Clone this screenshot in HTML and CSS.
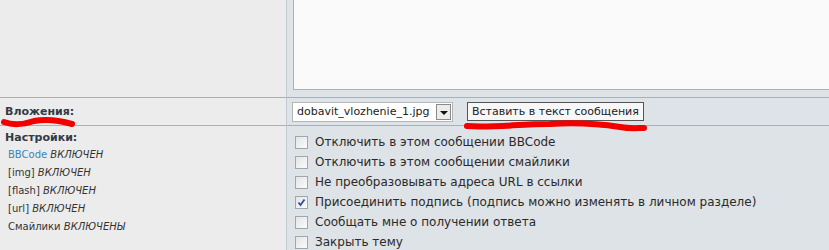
FILE: index.html
```html
<!DOCTYPE html>
<html lang="ru">
<head>
  <meta charset="UTF-8" />
  <title>Ответ</title>
  <link rel="stylesheet" href="styles.css">
</head>
<body>

<div class="post-form">
  <div class="cell left editor-left"></div>
  <div class="cell right editor-right">
    <div class="textarea"></div>
  </div>

  <div class="cell left attach-left line">
    <span class="label">Вложения:</span>
  </div>
  <div class="cell right attach-right line">
    <div class="select">
      <span class="select-text">dobavit_vlozhenie_1.jpg</span>
      <span class="select-arrow"></span>
    </div>
    <button class="btn">Вставить в текст сообщения</button>
  </div>

  <div class="cell left options-left line">
    <span class="label">Настройки:</span>
    <ul class="status">
      <li><span class="link">BBCode</span> <i>ВКЛЮЧЕН</i></li>
      <li>[img] <i>ВКЛЮЧЕН</i></li>
      <li>[flash] <i>ВКЛЮЧЕН</i></li>
      <li>[url] <i>ВКЛЮЧЕН</i></li>
      <li>Смайлики <i>ВКЛЮЧЕНЫ</i></li>
    </ul>
  </div>
  <div class="cell right options-right line">
    <label class="opt"><span class="box"></span>Отключить в этом сообщении BBCode</label>
    <label class="opt"><span class="box"></span>Отключить в этом сообщении смайлики</label>
    <label class="opt"><span class="box"></span>Не преобразовывать адреса URL в ссылки</label>
    <label class="opt"><span class="box checked">
      <svg width="11" height="11" viewBox="0 0 11 11"><path d="M2.5 5.5 L4.5 8 L8.5 2.5" fill="none" stroke="#2b4fa8" stroke-width="1.8"/></svg>
    </span>Присоединить подпись (подпись можно изменять в личном разделе)</label>
    <label class="opt"><span class="box"></span>Сообщать мне о получении ответа</label>
    <label class="opt"><span class="box"></span>Закрыть тему</label>
  </div>
</div>

<!-- красные пометки поверх скриншота -->
<svg class="marks" width="829" height="250" viewBox="0 0 829 250">
  <path d="M4 122 C 12 125, 22 125, 34 121 C 46 119, 58 120, 72 124" fill="none" stroke="#f20000" stroke-width="6" stroke-linecap="round"/>
  <path d="M467 126 C 490 128, 520 124, 550 124 C 580 122, 600 124, 620 127 C 630 129, 638 128, 644 128" fill="none" stroke="#f20000" stroke-width="6" stroke-linecap="round"/>
</svg>

</body>
</html>
```

FILE: styles.css
```css
body {
  margin: 0;
  font-family: "DejaVu Sans", Verdana, sans-serif;
  color: #333;
  background: #dee3e7;
  overflow: hidden;
}

.post-form {
  display: grid;
  grid-template-columns: 287px 1fr;
  height: 250px;
  grid-template-rows: 97px 28px 1fr;
}

.cell.left {
  background: #ececec;
  border-right: 1px solid #c3cad1;
}

.cell.right {
  background: #dee3e7;
}

.line {
  border-top: 1px solid #a8b0b8;
}

.editor-right {
  padding-left: 6px;
}

.textarea {
  height: 89px;
  background: #fafafa;
  border-left: 1px solid #a9b1b9;
  border-bottom: 1px solid #a9b1b9;
}

.label {
  font-size: 11px;
  font-weight: bold;
  color: #323a44;
}

.attach-left {
  display: flex;
  align-items: center;
  padding-left: 5px;
}

.attach-right {
  display: flex;
  align-items: center;
  gap: 14px;
  padding-left: 5px;
}

.select {
  display: flex;
  align-items: center;
  justify-content: space-between;
  width: 159px;
  height: 18px;
  background: #fff;
  border: 1px solid #b5b5b5;
  font-size: 11px;
  color: #222;
}

.select-text {
  padding-left: 4px;
}

.select-arrow {
  width: 13px;
  height: 14px;
  margin-right: 1px;
  border: 1px solid #8a8a8a;
  background: #ececec;
  position: relative;
}

.select-arrow::after {
  content: "";
  position: absolute;
  left: 3px;
  top: 6px;
  border-left: 4px solid transparent;
  border-right: 4px solid transparent;
  border-top: 4px solid #111;
}

.btn {
  height: 19px;
  padding: 0 4px;
  border: 1px solid #555;
  background: #f7f7f7;
  font-family: "DejaVu Sans", Verdana, sans-serif;
  font-size: 11px;
  color: #222;
}

.options-left {
  padding: 0 0 0 5px;
}

.status {
  list-style: none;
  margin: 1px 0 0 3px;
  padding: 0;
  font-size: 10px;
}

.status li {
  line-height: 18px;
}

.status i {
  color: #333;
}

.link {
  color: #3a86bb;
}

.options-right {
  padding: 6px 0 0 8px;
}

.opt {
  display: flex;
  align-items: center;
  gap: 7px;
  height: 20px;
  font-size: 12px;
  color: #2a2a2a;
}

.box {
  display: flex;
  align-items: center;
  justify-content: center;
  width: 11px;
  height: 11px;
  border: 1px solid #9ea6ae;
  background: linear-gradient(135deg, #e2e4e6, #fbfbfb);
}

.marks {
  position: absolute;
  left: 0;
  top: 0;
  pointer-events: none;
}
```
